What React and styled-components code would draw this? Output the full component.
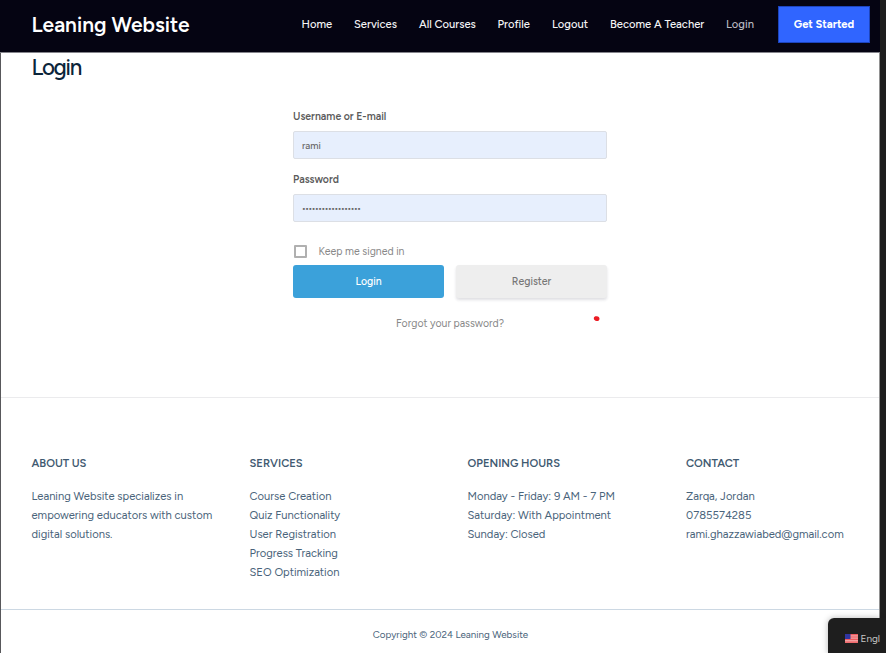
import React from "react";
import styled, { createGlobalStyle } from "styled-components";

const GlobalStyle = createGlobalStyle`
  * { box-sizing: border-box; }
  body {
    margin: 0;
    overflow: hidden;
    background: #1e1e1e;
    font-family: Figtree, Inter, sans-serif;
  }
  h1, h2, p, ul { margin: 0; padding: 0; }
  a { color: inherit; text-decoration: none; }
`;

const Desktop = styled.div`
  position: relative;
  width: 886px;
  height: 653px;
  background: #1e1e1e;
  overflow: hidden;
`;

const Page = styled.div`
  width: 880px;
  height: 653px;
  display: flex;
  flex-direction: column;
  background: #fff;
  border-left: 1px solid #58585b;
  border-right: 1px solid #929292;
`;

const Header = styled.header`
  height: 53px;
  flex: none;
  margin: 0 -1px;
  padding: 0 10px 4px 31.5px;
  display: flex;
  align-items: center;
  background: #050412;
  border-bottom: 1px solid #85858c;
  color: #fff;
`;

const Brand = styled.a`
  width: 270px;
  font-size: 20.95px;
  font-weight: 600;
  white-space: nowrap;
`;

const Nav = styled.nav`
  display: grid;
  grid-template-columns: 52.5px 65px 78.5px 54.5px 58px 116px 52px;
`;

const NavLink = styled.a`
  font-size: 11.2px;
  font-weight: 500;
  white-space: nowrap;
  color: ${(p) => (p.$current ? "#b9b9c1" : "#f4f4f6")};
`;

const GetStarted = styled.a`
  width: 92px;
  height: 37px;
  display: flex;
  align-items: center;
  justify-content: center;
  background: #3065ff;
  border: 1px solid #1d45bd;
  font-size: 11.2px;
  font-weight: 700;
`;

const Main = styled.main`
  height: 345px;
  flex: none;
  border-bottom: 1px solid #ebebed;
`;

const Title = styled.h1`
  height: 52px;
  padding: 1px 0 0 30.5px;
  font-size: 22.4px;
  line-height: 28px;
  font-weight: 500;
  letter-spacing: -1.3px;
  color: #0b253a;
`;

const Form = styled.form`
  width: 314px;
  margin-left: 292px;
  display: flex;
  flex-direction: column;
`;

const Label = styled.label`
  height: 26px;
  line-height: 23px;
  font-size: 10.5px;
  font-weight: 600;
  color: #5b5b5b;
`;

const Input = styled.input`
  width: 100%;
  height: 28px;
  margin-bottom: 9px;
  padding: 0 8px;
  background: #e7effd;
  border: 1px solid #dcdfe5;
  border-radius: 2px;
  outline: none;
  font: 500 9.6px Figtree, Inter, sans-serif;
  color: #676767;

  &[type="password"] {
    padding-left: 7.5px;
    letter-spacing: -1.38px;
  }
`;

const KeepRow = styled.label`
  height: 20px;
  margin-top: 10px;
  padding-left: 1px;
  display: flex;
  align-items: center;
  gap: 11.5px;
  font-size: 10.5px;
  color: #888;
`;

const Checkbox = styled.span`
  width: 13px;
  height: 13px;
  border: 2px solid #b0b0b0;
  border-radius: 1px;
`;

const Actions = styled.div`
  display: grid;
  grid-template-columns: 151px 151px;
  gap: 12px;
  margin-top: 4px;
`;

const Button = styled.button`
  height: 33px;
  padding: 0;
  border: 0;
  border-radius: 3px;
  background: ${(p) => (p.$primary ? "#3ba1da" : "#eee")};
  color: ${(p) => (p.$primary ? "#fff" : "#777")};
  box-shadow: ${(p) => (p.$primary ? "none" : "0 2px 3px rgba(30, 30, 60, 0.14)")};
  font: 500 10.5px Figtree, Inter, sans-serif;
`;

const Forgot = styled.a`
  align-self: center;
  margin-top: 16px;
  line-height: 20px;
  font-size: 10.5px;
  color: #888;
`;

const Pointer = styled.svg`
  position: absolute;
  left: 593px;
  top: 315px;
`;

const Footer = styled.footer`
  height: 212px;
  flex: none;
  padding: 55px 0 0 30.5px;
  display: grid;
  grid-template-columns: 218px 218px 218.5px 1fr;
  border-bottom: 1px solid #ccd8e3;
  color: #49637a;
`;

const FooterHeading = styled.h2`
  height: 34px;
  line-height: 20px;
  font-size: 11.2px;
  font-weight: 600;
  color: #3f5a71;
`;

const FooterLine = styled.p`
  line-height: 18.9px;
  font-size: 11.2px;
  white-space: nowrap;
`;

const Copyright = styled.p`
  padding-top: 15px;
  padding-left: 21px;
  line-height: 20px;
  text-align: center;
  font-size: 9.8px;
  color: #49637a;
`;

const Language = styled.div`
  position: absolute;
  left: 828px;
  top: 618px;
  width: 58px;
  height: 36px;
  padding: 5px 0 0 16.5px;
  display: flex;
  align-items: center;
  gap: 3px;
  border-radius: 6px 0 0 0;
  background: #1e1e1e;
  color: #c6c6c6;
  font-size: 10px;

  svg { flex: none; }
`;

const LanguageShade = styled.div`
  position: absolute;
  left: 828px;
  top: 618px;
  width: 52px;
  height: 36px;
  border-radius: 6px 0 0 0;
  box-shadow: 0 0 6px rgba(0, 0, 0, 0.28);
`;

const links = ["Home", "Services", "All Courses", "Profile", "Logout", "Become A Teacher", "Login"];

const columns = [
  { title: "ABOUT US", lines: ["Leaning Website specializes in", "empowering educators with custom", "digital solutions."] },
  { title: "SERVICES", lines: ["Course Creation", "Quiz Functionality", "User Registration", "Progress Tracking", "SEO Optimization"] },
  { title: "OPENING HOURS", lines: ["Monday - Friday: 9 AM - 7 PM", "Saturday: With Appointment", "Sunday: Closed"] },
  { title: "CONTACT", lines: ["Zarqa, Jordan", "0785574285", "rami.ghazzawiabed@gmail.com"] },
];

function Flag() {
  return (
    <svg width="13" height="9" viewBox="0 0 13 9">
      <rect width="13" height="9" rx="0.5" fill="#f3a0a0" />
      <path d="M0 .6H13M0 3H13M0 5.4H13M0 8.1H13" stroke="#ee5a5e" strokeWidth="1.2" />
      <rect width="5.5" height="5" fill="#3035a0" />
    </svg>
  );
}

export default function App() {
  return (
    <Desktop>
      <GlobalStyle />
      <Page>
        <Header>
          <Brand href="#">Leaning Website</Brand>
          <Nav>
            {links.map((label) => (
              <NavLink key={label} href="#" $current={label === "Login"}>
                {label}
              </NavLink>
            ))}
          </Nav>
          <GetStarted href="#">Get Started</GetStarted>
        </Header>
        <Main>
          <Title>Login</Title>
          <Form>
            <Label htmlFor="user">Username or E-mail</Label>
            <Input id="user" defaultValue="rami" />
            <Label htmlFor="pass">Password</Label>
            <Input id="pass" type="password" defaultValue="learningwebsite123" />
            <KeepRow>
              <Checkbox />
              Keep me signed in
            </KeepRow>
            <Actions>
              <Button type="button" $primary>Login</Button>
              <Button type="button">Register</Button>
            </Actions>
            <Forgot href="#">Forgot your password?</Forgot>
          </Form>
        </Main>
        <Footer>
          {columns.map((c) => (
            <div key={c.title}>
              <FooterHeading>{c.title}</FooterHeading>
              {c.lines.map((text) => (
                <FooterLine key={text}>{text}</FooterLine>
              ))}
            </div>
          ))}
        </Footer>
        <Copyright>Copyright © 2024 Leaning Website</Copyright>
      </Page>
      <Pointer width="8" height="8" viewBox="0 0 8 8">
        <path d="M.8 3C1 1.6 2.4 1 3.8 1.3 5.4 1.3 6.7 2.5 6.5 4 6.4 5.5 5 6.3 3.7 6 2 5.9.6 4.6.8 3Z" fill="#ec1c24" />
      </Pointer>
      <LanguageShade />
      <Language>
        <Flag />
        Engl
      </Language>
    </Desktop>
  );
}
